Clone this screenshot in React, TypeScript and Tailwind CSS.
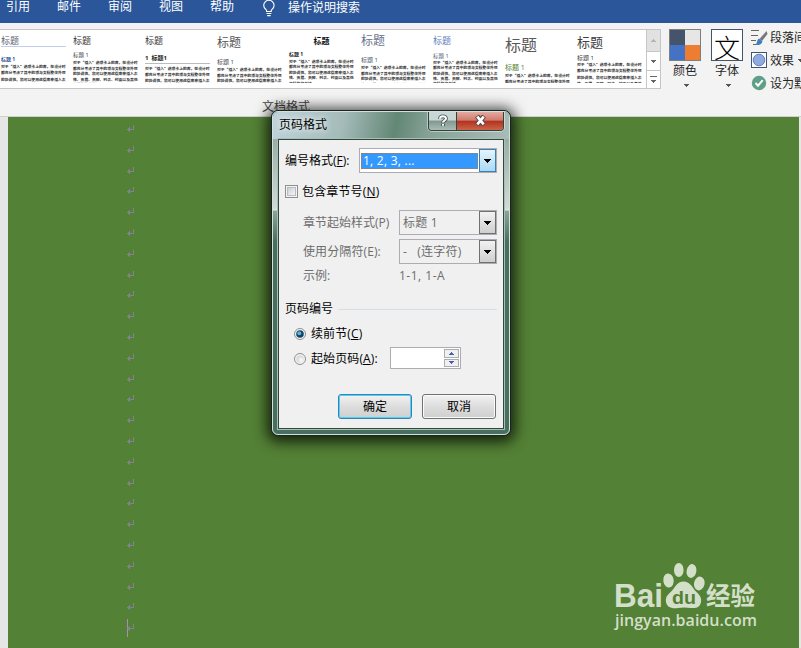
import React from 'react';

const UI_FONT = "font-['Open_Sans','Noto_Sans_CJK_SC',sans-serif]";

const TABS = ['引用', '邮件', '审阅', '视图', '帮助'];

const SAMPLE =
  '对于“插入”选项卡上的库，在设计时都充分考虑了其中的项与文档整体外观的协调性。您可以使用这些库来插入表格、页眉、页脚、列表、封面以及其他文档构建基块。';

interface StyleSet {
  title: string;
  heading: string;
  headingText: string;
  body: string;
}

// One entry per thumbnail in the document formatting gallery
const STYLE_SETS: StyleSet[] = [
  {
    title: 'text-[9px] h-[17px] leading-[22px] text-[#5a6270] border-b border-[#c3cde6]',
    heading: 'mt-[9px] text-[5px] leading-[7px] font-bold text-[#2f5496]',
    headingText: '标题 1',
    body: 'mt-[1px] leading-[6.3px]',
  },
  {
    title: 'text-[9px] h-[17px] leading-[22px] text-[#333]',
    heading: 'mt-[5px] text-[5.5px] leading-[7px] text-[#333]',
    headingText: '标题 1',
    body: 'mt-[1px] leading-[5.6px]',
  },
  {
    title: 'text-[9px] h-[17px] leading-[22px] text-[#333]',
    heading: 'mt-[6px] mb-[2px] text-[6px] leading-[10px] font-bold text-[#222] border-b border-[#bbb]',
    headingText: '1  标题1',
    body: 'leading-[6px]',
  },
  {
    title: 'text-[12px] h-[20px] leading-[25px] text-[#555]',
    heading: 'mt-[9px] text-[6px] leading-[7px] text-[#444]',
    headingText: '标题 1',
    body: 'mt-[1px] leading-[5.5px]',
  },
  {
    title: 'text-[8px] h-[17px] leading-[21px] text-[#111] text-center font-bold',
    heading: 'mt-[4px] text-[5px] leading-[7px] font-bold text-[#222]',
    headingText: '标题 1',
    body: 'mt-[1px] leading-[5.4px]',
  },
  {
    title: 'text-[12px] h-[20px] leading-[22px] text-[#68738a]',
    heading: 'mt-[6px] text-[6px] leading-[8px] text-[#44546a]',
    headingText: '标题 1',
    body: 'mt-[1px] leading-[5.6px]',
  },
  {
    title: 'text-[9px] h-[17px] leading-[22px] text-[#5b7fc0]',
    heading: 'mt-[6px] text-[5.5px] leading-[7px] text-[#44546a]',
    headingText: '标题 1',
    body: 'leading-[5.3px]',
  },
  {
    title: 'text-[16px] h-[24px] leading-[30px] text-[#595959]',
    heading: 'mt-[10px] text-[7px] leading-[8px] text-[#538135]',
    headingText: '标题 1',
    body: 'mt-[1px] leading-[5.5px]',
  },
  {
    title: 'text-[13px] h-[20px] leading-[25px] text-[#404040]',
    heading: 'mt-[4px] text-[6px] leading-[8px] text-[#333]',
    headingText: '标题 1',
    body: 'leading-[6.3px]',
  },
];

const DownArrow = ({ className = '' }: { className?: string }) => (
  <svg width="7" height="4" viewBox="0 0 7 4" className={`shrink-0 ${className}`} shapeRendering="crispEdges">
    <path d="M0 0H7L3.5 4Z" fill="currentColor" />
  </svg>
);

const TabBar = () => (
  <div className="flex h-[23px] bg-[#2b579a] pl-[6px] text-[12px] leading-[14px] text-white">
    {TABS.map((tab) => (
      <span key={tab} className="mr-[27px] w-6 shrink-0 whitespace-nowrap">
        {tab}
      </span>
    ))}
    <svg width="14" height="17" viewBox="0 0 14 17" className="mr-[12px] ml-[1px] shrink-0" fill="none" stroke="#fff" strokeWidth="1.1">
      <path d="M4.5 11.5V10.2C3.3 9 1.7 7.9 1.7 5.5A5.2 5.2 0 0 1 12.1 5.5C12.1 7.9 10.5 9 9.3 10.2V11.5Z" />
      <path d="M4.5 13.5H9.3M5.2 15.6H8.6" />
    </svg>
    <span className="pt-px whitespace-nowrap">操作说明搜索</span>
  </div>
);

const Gallery = () => (
  <div className="flex h-[60px] w-[661px] shrink-0 border-y border-r border-[#c6c6c6] bg-white">
    <div className="flex w-[646px] overflow-hidden">
      {STYLE_SETS.map((set, i) => (
        <div key={i} className="h-[53px] w-[72px] shrink-0 overflow-hidden pr-[6px] pl-[1px]">
          <div className={set.title}>标题</div>
          <div className={`whitespace-pre ${set.heading}`}>{set.headingText}</div>
          <p className={`font-['Noto_Sans_CJK_SC',sans-serif] text-[3.8px] font-bold break-all text-[#333] ${set.body}`}>{SAMPLE}</p>
        </div>
      ))}
    </div>
    <div className="flex w-[14px] flex-col border-l border-[#c6c6c6]">
      <div className="flex h-[21px] items-center justify-center bg-[#e1e1e1]">
        <DownArrow className="h-[3px] w-[5px] rotate-180 text-[#b5b5b5]" />
      </div>
      <div className="flex h-[19px] items-center justify-center border-t border-[#c6c6c6]">
        <DownArrow className="h-[3px] w-[5px] text-[#666]" />
      </div>
      <div className="flex flex-1 flex-col items-center justify-center gap-[3px] border-t border-[#c6c6c6]">
        <div className="h-px w-[7px] bg-[#666]" />
        <DownArrow className="h-[3px] w-[5px] text-[#666]" />
      </div>
    </div>
  </div>
);

const Ribbon = () => (
  <div className="h-[94px] overflow-hidden border-b border-[#d0d0d0] bg-[#f3f3f3] pt-[6px] text-[12px] text-[#262626]">
    <div className="flex h-[68px]">
      <Gallery />
      <div className="ml-[8px] flex w-8 shrink-0 flex-col items-center">
        <div className="grid h-8 w-8 shrink-0 grid-cols-2 border border-[#7f7f7f]">
          <div className="bg-[#44546a]" />
          <div className="bg-[#e7e6e6]" />
          <div className="bg-[#4472c4]" />
          <div className="bg-[#ed7d31]" />
        </div>
        <span className="mt-[2px] leading-[16px]">颜色</span>
        <DownArrow className="mt-[5px] ml-[3px] h-[3px] w-[5px] text-[#555]" />
      </div>
      <div className="ml-[10px] flex w-8 shrink-0 flex-col items-center">
        <div className="flex h-8 w-8 shrink-0 items-center justify-center border border-[#44546a] bg-white font-['Noto_Sans_CJK_SC',sans-serif] text-[26px] leading-[28px] font-light text-black">
          <span className="pt-[3px]">文</span>
        </div>
        <span className="mt-[2px] leading-[16px]">字体</span>
        <DownArrow className="mt-[5px] ml-[3px] h-[3px] w-[5px] text-[#555]" />
      </div>
      <div className="ml-[8px] flex w-[100px] shrink-0 flex-col whitespace-nowrap">
        <div className="flex h-[17px] items-center gap-[2px]">
          <svg width="17" height="17" viewBox="0 0 17 17" className="shrink-0">
            <path d="M0 1.5H8M0 6.5H7M0 11.5H5M2 15.5H5" stroke="#666" />
            <path d="M15.5 2L16.5 5L11 12L8.5 10Z" fill="#777" />
            <path d="M8 9.5L11.5 12.5C10.5 15.5 8 16.5 4.5 16C6.5 14 5.5 11 8 9.5Z" fill="#3f7fc0" />
          </svg>
          <span>段落间距</span>
        </div>
        <div className="mt-[6px] flex h-4 items-center gap-[3px]">
          <svg width="16" height="16" viewBox="0 0 16 16" className="shrink-0">
            <rect x="0.5" y="0.5" width="15" height="15" fill="#fff" stroke="#44546a" />
            <circle cx="8" cy="8" r="5.8" fill="#8faadc" stroke="#5f7fc8" />
          </svg>
          <span className="pt-px">效果</span>
          <DownArrow className="ml-px h-[3px] w-[5px] text-[#555]" />
        </div>
        <div className="mt-[7px] flex h-4 items-center gap-[3px]">
          <svg width="16" height="16" viewBox="0 0 16 16" className="shrink-0">
            <circle cx="8" cy="8" r="7.2" fill="#5f9f88" />
            <path d="M4.5 8L7 10.7L11.7 5.2" fill="none" stroke="#fff" strokeWidth="1.9" />
          </svg>
          <span className="pt-px">设为默认值</span>
        </div>
      </div>
    </div>
    <div className="mt-[2px] pl-[262px] leading-[16px] text-[#444]">文档格式</div>
  </div>
);

const ParagraphMark = () => (
  <svg width="7" height="8" viewBox="0 0 7 8" className="block" shapeRendering="crispEdges">
    <path d="M6 0H7V5H3V7H2V6H1V5H0V4H1V3H2V2H3V4H6Z" fill="#84818f" />
  </svg>
);

const DocumentArea = () => (
  <div className="flex h-[531px] bg-[#e6e6e6] pr-[2px] pl-[8px]">
    <div className="flex-1 bg-[#538135] pt-[8px] pl-[119px]">
      {Array.from({ length: 25 }, (_, i) => (
        <div key={i} className="flex h-[20.8px] items-start">
          <div className={i === 24 ? '-mt-[5px] h-[18px] w-px bg-[#a58fad]' : 'w-px'} />
          <div className="-ml-px">
            <ParagraphMark />
          </div>
        </div>
      ))}
    </div>
  </div>
);

interface ComboProps {
  children: React.ReactNode;
  className: string;
  active?: boolean;
}

const Combo = ({ children, className, active }: ComboProps) => (
  <div
    className={`flex h-[25px] shrink-0 border border-[#abadb3] ${active ? 'bg-white' : 'bg-[#f0f0f0] text-[#6d6d6d]'} ${className}`}
  >
    <div className="flex min-w-0 flex-1 items-center px-px">
      {active ? (
        <span className="w-full border border-dotted border-[#c47728] bg-[#3399ff] pl-px leading-[14px] tracking-[0.25px] text-white">{children}</span>
      ) : (
        <span className="pl-[2px] tracking-[0.25px] whitespace-pre">{children}</span>
      )}
    </div>
    <div
      className={
        active
          ? 'flex w-[17px] items-center justify-center border border-[#3c7fb1] bg-linear-to-b from-[#e5f4fc] to-[#a8daf5] text-black'
          : 'flex w-[17px] items-center justify-center border border-[#707070] bg-linear-to-b from-[#f2f2f2] to-[#cfcfcf] text-black'
      }
    >
      <DownArrow />
    </div>
  </div>
);

const Radio = ({ checked }: { checked?: boolean }) => (
  <svg width="12" height="12" viewBox="0 0 12 12" className="shrink-0">
    <circle cx="6" cy="6" r="5.5" fill="#f4f4f4" stroke="#8e8f8f" />
    <circle cx="6" cy="6" r="3.8" fill={checked ? '#164265' : '#d9dcdf'} />
    {checked ? <circle cx="5.3" cy="5.3" r="2" fill="#56b8dc" /> : <circle cx="7" cy="7" r="2.4" fill="#f2f2f2" />}
  </svg>
);

const DialogButton = ({ label, primary }: { label: string; primary?: boolean }) => (
  <button
    className={`h-[25px] w-[74px] rounded-[3px] border bg-linear-to-b from-[#f2f2f2] from-0% via-[#dddddd] via-50% to-[#cfcfcf] leading-[22px] ${
      primary ? 'border-[#3c7fb1] shadow-[inset_0_0_0_1px_#46d4fb]' : 'border-[#707070] shadow-[inset_0_0_0_1px_#fbfbfb]'
    }`}
  >
    {label}
  </button>
);

const TitleBar = () => (
  <div className="flex h-[27px] justify-between pl-[6px]">
    <span className="pt-[5px] leading-[16px] text-black [text-shadow:0_0_7px_#fff,0_0_7px_#ffffff90]">页码格式</span>
    <div className="mr-[5px] flex h-[19px] overflow-hidden rounded-b-[4px] border border-t-0 border-[#34423f] shadow-[0_0_0_1px_#ffffff70]">
      <div className="flex w-[28px] items-center justify-center border-r border-[#34423f] bg-linear-to-b from-[#c8d6d4] from-45% via-[#80978f] via-50% to-[#a9bdb5]">
        <svg width="12" height="13" viewBox="0 0 12 13" fill="none" className="-mt-[2px]">
          <path d="M3 4.8C3 1.5 9 1.5 9 4.5C9 6.7 6 6.3 6 8.8M6 9.8V12" stroke="#4b5556" strokeWidth="3.8" />
          <path d="M3 4.8C3 1.5 9 1.5 9 4.5C9 6.7 6 6.3 6 8.6M6 9.9V11.7" stroke="#fff" strokeWidth="2" />
        </svg>
      </div>
      <div className="flex w-[46px] items-center justify-center bg-[linear-gradient(to_bottom,#e3aaa0_0%,#cf7a6d_46%,#b2311c_50%,#c9654a_100%)]">
        <svg width="13" height="11" viewBox="0 0 13 11" fill="none" className="-mt-[2px]">
          <path d="M3 1L10 10M10 1L3 10" stroke="#5a4548" strokeWidth="4.8" />
          <path d="M3.3 1.6L9.7 9.4M9.7 1.6L3.3 9.4" stroke="#fff" strokeWidth="2.7" />
        </svg>
      </div>
    </div>
  </div>
);

const PageNumberDialog = () => (
  <div className="absolute top-[110px] left-[271px] h-[326px] w-[240px] rounded-[7px] border border-[#1a2420] bg-[#47705f] text-[12px] text-black shadow-[0_2px_14px_4px_rgba(0,0,0,0.75)]">
    <div className="h-full overflow-hidden rounded-[6px] border border-[#d3e0db] bg-[linear-gradient(to_bottom,transparent_0,transparent_27px,#98aea5_27px,#d0dad6_96px,#e0e8e5_98px,#8ba69a_99px,#47705f_130px,#47705f_100%)]">
      <div className="-mx-px bg-[linear-gradient(100deg,#c0d3dc_0%,#a4bbb9_30%,#638775_52%,#86a297_66%,#a9bdb6_100%)] px-px">
        <TitleBar />
      </div>
      <div className="mx-[5px] h-[290px] border border-[#31483e] bg-[#f0f0f0] pt-[8px] pr-[6px] pl-[6px] shadow-[0_0_0_1px_#a9bfb5]">
        <div className="flex items-center justify-between">
          <span>
            编号格式(<u>F</u>):
          </span>
          <Combo active className="w-[138px]">
            1, 2, 3, ...
          </Combo>
        </div>
        <div className="mt-[12px] flex h-[13px] items-center gap-[4px]">
          <div className="h-[13px] w-[13px] border border-[#8e8f8f] bg-[#f4f4f4] p-[1px]">
            <div className="h-full w-full border border-[#b9bdc2] bg-linear-to-br from-[#cbcfd5] to-[#f6f6f6]" />
          </div>
          <span className="tracking-[0.15px]">
            包含章节号(<u>N</u>)
          </span>
        </div>
        <div className="mt-[12px] flex items-center justify-between pl-[18px]">
          <span className="text-[#6d6d6d]">章节起始样式(P)</span>
          <Combo className="w-[98px]">标题 1</Combo>
        </div>
        <div className="mt-[4px] flex items-center justify-between pl-[18px]">
          <span className="tracking-[0.1px] text-[#6d6d6d]">使用分隔符(E):</span>
          <Combo className="w-[98px]">{'-   (连字符)'}</Combo>
        </div>
        <div className="mt-[4px] flex h-4 items-center pl-[18px] text-[#6d6d6d]">
          <span className="w-[96px]">示例:</span>
          <span className="tracking-[0.5px]">1-1, 1-A</span>
        </div>
        <div className="mt-[17px] flex h-4 items-center gap-[5px]">
          <span>页码编号</span>
          <div className="h-px flex-1 bg-[#d5dfe5]" />
        </div>
        <div className="mt-[9px] flex h-4 items-center gap-[5px] pl-[9px]">
          <Radio checked />
          <span className="tracking-[0.1px]">
            续前节(<u>C</u>)
          </span>
        </div>
        <div className="mt-[5px] flex h-[22px] items-center pl-[9px]">
          <div className="pt-px">
            <Radio />
          </div>
          <span className="ml-[5px] w-[79px] pt-px tracking-[0.1px]">
            起始页码(<u>A</u>):
          </span>
          <div className="flex h-[22px] w-[71px] justify-end border border-[#abadb3] bg-white p-[1px]">
            <div className="flex w-[15px] flex-col gap-px">
              <div className="flex flex-1 items-center justify-center border border-[#abadb3] bg-[#f0f0f0]">
                <DownArrow className="h-[3px] w-[5px] rotate-180 text-[#4a5fa8]" />
              </div>
              <div className="flex flex-1 items-center justify-center border border-[#abadb3] bg-[#f0f0f0]">
                <DownArrow className="h-[3px] w-[5px] text-[#4a5fa8]" />
              </div>
            </div>
          </div>
        </div>
        <div className="mt-[25px] flex justify-end gap-[10px] pr-[1px]">
          <DialogButton label="确定" primary />
          <DialogButton label="取消" />
        </div>
      </div>
    </div>
  </div>
);

const Watermark = () => (
  <svg width="150" height="75" viewBox="0 0 150 75" className="absolute top-[560px] left-[610px]" fill="#d3dfc9">
    <text x="4" y="47" fontSize="33" fontWeight="700" textLength="49" lengthAdjust="spacingAndGlyphs" fontFamily="Liberation Sans, sans-serif">
      Bai
    </text>
    <ellipse cx="58.5" cy="20.5" rx="5.2" ry="7" transform="rotate(-8 58.5 20.5)" />
    <ellipse cx="68.8" cy="10" rx="4.8" ry="7" />
    <ellipse cx="81.5" cy="11" rx="4.9" ry="7" transform="rotate(12 81.5 11)" />
    <ellipse cx="89.3" cy="23.5" rx="5.3" ry="7" transform="rotate(12 89.3 23.5)" />
    <path d="M73.5 21.5C80 21.5 82 27 85 30.5C89 34.5 92 37 91 42C90 47.5 86 48.5 81 48C76 47.3 72 47.3 68 48C61 49 57 47 56 42C55 36 59 34 62.5 30C66 26 67.5 21.5 73.5 21.5Z" />
    <text x="62" y="43.5" fontSize="19" fontWeight="700" fill="#538135" textLength="24" lengthAdjust="spacingAndGlyphs" fontFamily="Liberation Sans, sans-serif">
      du
    </text>
    <text x="96" y="45" fontSize="25" fontWeight="700" textLength="49" lengthAdjust="spacingAndGlyphs" fontFamily="Noto Sans CJK SC, sans-serif">
      经验
    </text>
    <text x="5" y="66" fontSize="16" fontWeight="600" textLength="142" lengthAdjust="spacing" fontFamily="Open Sans, sans-serif">
      jingyan.baidu.com
    </text>
  </svg>
);

export default function App() {
  return (
    <div className={`relative h-[648px] w-[801px] overflow-hidden bg-[#f3f3f3] ${UI_FONT}`}>
      <TabBar />
      <Ribbon />
      <DocumentArea />
      <Watermark />
      <PageNumberDialog />
    </div>
  );
}
